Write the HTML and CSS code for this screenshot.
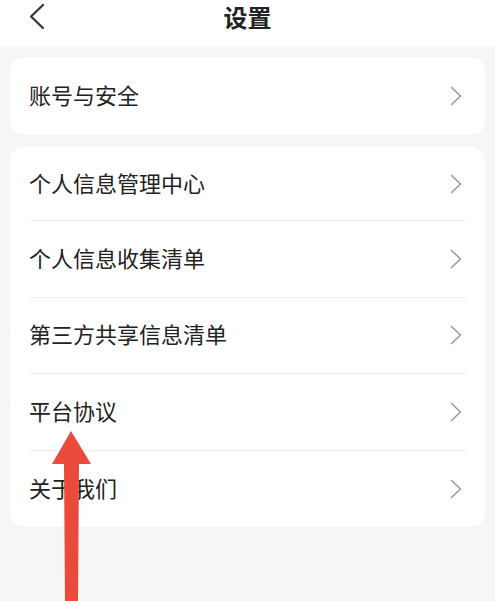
FILE: index.html
```html
<!DOCTYPE html>
<html lang="zh-CN">
<head>
<meta charset="utf-8">
<title>设置</title>
<link rel="stylesheet" href="styles.css">
</head>
<body>
<div class="screen">
  <header class="topbar">
    <svg class="back" width="18" height="28" viewBox="0 0 18 28"><path d="M15 2 L3 13.5 L15 25" fill="none" stroke="#333" stroke-width="2.2" stroke-linecap="round" stroke-linejoin="round"/></svg>
    <h1 class="title">设置</h1>
    <span></span>
  </header>
  <main class="content">
    <section class="card">
      <div class="row single"><span class="label">账号与安全</span><svg class="chev" width="12" height="20" viewBox="0 0 12 20"><path d="M1.5 1.5 L10.5 10 L1.5 18.5" fill="none" stroke="#9a9a9a" stroke-width="1.6" stroke-linecap="round" stroke-linejoin="round"/></svg></div>
    </section>
    <section class="card">
      <div class="row"><span class="label">个人信息管理中心</span><svg class="chev" width="12" height="20" viewBox="0 0 12 20"><path d="M1.5 1.5 L10.5 10 L1.5 18.5" fill="none" stroke="#9a9a9a" stroke-width="1.6" stroke-linecap="round" stroke-linejoin="round"/></svg></div>
      <div class="row"><span class="label">个人信息收集清单</span><svg class="chev" width="12" height="20" viewBox="0 0 12 20"><path d="M1.5 1.5 L10.5 10 L1.5 18.5" fill="none" stroke="#9a9a9a" stroke-width="1.6" stroke-linecap="round" stroke-linejoin="round"/></svg></div>
      <div class="row"><span class="label">第三方共享信息清单</span><svg class="chev" width="12" height="20" viewBox="0 0 12 20"><path d="M1.5 1.5 L10.5 10 L1.5 18.5" fill="none" stroke="#9a9a9a" stroke-width="1.6" stroke-linecap="round" stroke-linejoin="round"/></svg></div>
      <div class="row"><span class="label">平台协议</span><svg class="chev" width="12" height="20" viewBox="0 0 12 20"><path d="M1.5 1.5 L10.5 10 L1.5 18.5" fill="none" stroke="#9a9a9a" stroke-width="1.6" stroke-linecap="round" stroke-linejoin="round"/></svg></div>
      <div class="row"><span class="label">关于我们</span><svg class="chev" width="12" height="20" viewBox="0 0 12 20"><path d="M1.5 1.5 L10.5 10 L1.5 18.5" fill="none" stroke="#9a9a9a" stroke-width="1.6" stroke-linecap="round" stroke-linejoin="round"/></svg></div>
    </section>
  </main>
  <svg class="arrow" width="42" height="171" viewBox="0 0 42 171"><polygon points="21,1 41,34 29,34 28,171 15,171 14,34 2,34" fill="#e94a3b"/></svg>
</div>
</body>
</html>
```
FILE: styles.css
```css
html, body {
  margin: 0;
  padding: 0;
}
body {
  width: 495px;
  height: 601px;
  overflow: hidden;
  background: #f6f6f6;
  font-family: "Noto Sans CJK SC", "Noto Sans", sans-serif;
  color: #222;
}
.screen {
  position: relative;
  width: 495px;
  height: 601px;
}
.topbar {
  height: 34px;
  padding: 0 0 12px 0;
  background: #fff;
  display: grid;
  grid-template-columns: 1fr auto 1fr;
  align-items: center;
}
.back {
  margin-left: 28px;
  display: block;
}
.title {
  margin: 0;
  font-size: 24px;
  font-weight: 700;
  line-height: 34px;
  color: #222;
}
.content {
  padding: 11px 10px 0 10px;
  display: flex;
  flex-direction: column;
  gap: 12px;
}
.card {
  background: #fff;
  border-radius: 14px;
  padding: 0 18px 0 19px;
}
.row {
  height: 76.5px;
  display: flex;
  align-items: center;
  justify-content: space-between;
  padding-right: 5px;
  border-bottom: 1px solid #efefef;
  box-sizing: border-box;
}
.row:first-child {
  height: 74px;
}
.row:last-child {
  border-bottom: none;
}
.row.single {
  height: 78px;
}
.label {
  font-size: 22px;
  line-height: 30px;
  margin-bottom: 4px;
  color: #222;
}
.chev {
  display: block;
}
.arrow {
  position: absolute;
  left: 50px;
  top: 430px;
}
```
